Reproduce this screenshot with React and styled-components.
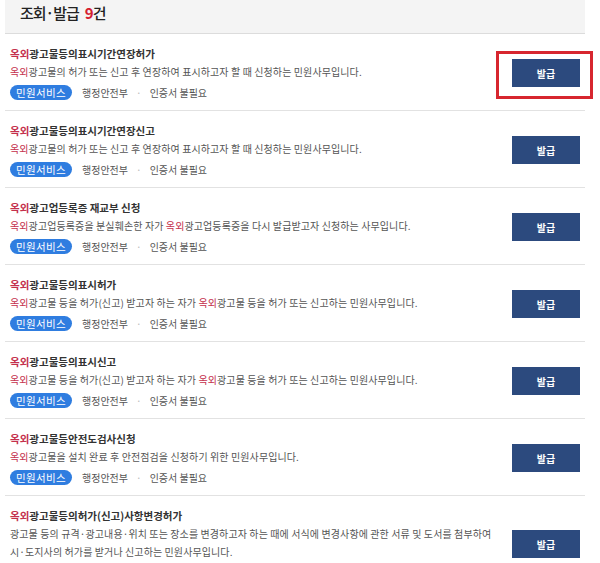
import React from "react"
import styled, { createGlobalStyle } from "styled-components"

const Global = createGlobalStyle`
body {
  margin: 0;
  background: #fff;
  font-family: "Noto Sans CJK KR", "Noto Sans", sans-serif;
}
`

const Page = styled.div`
width: 580px;
margin-left: 5px;
`

const Header = styled.div`
height: 34px;
background-color: #f4f4f4;
border-bottom: 1px solid #dcdcdc;
display: flex;
align-items: flex-start;
padding-left: 15px;
box-sizing: border-box;
`

const HeaderTitle = styled.h2`
margin: 0;
padding-top: 3px;
font-size: 15px;
font-weight: 500;
letter-spacing: -1px;
color: #222;
line-height: 20px;
`

const Count = styled.span`
color: #d5202f;
font-weight: 700;
margin-left: 6px;
`

const Row = styled.div`
display: flex;
align-items: center;
border-bottom: 1px solid #e2e2e2;
padding: 12px 5px 10px 5px;
`

const Info = styled.div`
flex: 1;
min-width: 0;
padding-right: 18px;
`

const Title = styled.div`
font-size: 10.5px;
font-weight: 700;
color: #333;
letter-spacing: 0;
line-height: 16px;
`

const Desc = styled.div`
font-size: 10px;
color: #555;
letter-spacing: 0.1px;
line-height: 18px;
margin-top: 1px;
`

const Hl = styled.span`
color: #c4304c;
`

const Meta = styled.div`
display: flex;
align-items: center;
margin-top: 4px;
font-size: 10px;
color: #555;
letter-spacing: 0;
`

const Tag = styled.span`
display: inline-flex;
align-items: center;
justify-content: center;
width: 62px;
height: 15px;
border-radius: 8px;
background-color: #2f7de0;
color: #fff;
font-size: 10.5px;
letter-spacing: 0.3px;
margin-right: 10px;
`

const Dot = styled.span`
color: #bbb;
margin: 0 8px;
`

const ButtonWrap = styled.div`
position: relative;
flex: none;
`

const IssueButton = styled.button`
width: 68px;
height: 28px;
border: none;
background-color: #2c4a7e;
color: #fff;
font-family: inherit;
font-size: 10px;
font-weight: 700;
cursor: pointer;
`

const Mark = styled.div`
position: absolute;
left: -16px;
top: -8px;
width: 97px;
height: 48px;
border: 3px solid #d7262f;
box-sizing: border-box;
pointer-events: none;
`

const items = [
  {
    title: "옥외광고물등의표시기간연장허가",
    desc: "옥외광고물의 허가 또는 신고 후 연장하여 표시하고자 할 때 신청하는 민원사무입니다.",
    marked: true,
  },
  {
    title: "옥외광고물등의표시기간연장신고",
    desc: "옥외광고물의 허가 또는 신고 후 연장하여 표시하고자 할 때 신청하는 민원사무입니다.",
  },
  {
    title: "옥외광고업등록증 재교부 신청",
    desc: "옥외광고업등록증을 분실훼손한 자가 옥외광고업등록증을 다시 발급받고자 신청하는 사무입니다.",
  },
  {
    title: "옥외광고물등의표시허가",
    desc: "옥외광고물 등을 허가(신고) 받고자 하는 자가 옥외광고물 등을 허가 또는 신고하는 민원사무입니다.",
  },
  {
    title: "옥외광고물등의표시신고",
    desc: "옥외광고물 등을 허가(신고) 받고자 하는 자가 옥외광고물 등을 허가 또는 신고하는 민원사무입니다.",
  },
  {
    title: "옥외광고물등안전도검사신청",
    desc: "옥외광고물을 설치 완료 후 안전점검을 신청하기 위한 민원사무입니다.",
  },
  {
    title: "옥외광고물등의허가(신고)사항변경허가",
    desc: "광고물 등의 규격·광고내용·위치 또는 장소를 변경하고자 하는 때에 서식에 변경사항에 관한 서류 및 도서를 첨부하여 시·도지사의 허가를 받거나 신고하는 민원사무입니다.",
  },
]

// "옥외" shows in red wherever it appears
const highlight = (text) =>
  text.split("옥외").map((part, i) => (
    <React.Fragment key={i}>
      {i > 0 && <Hl>옥외</Hl>}
      {part}
    </React.Fragment>
  ))

const App = () => {
  return (
    <Page>
      <Global />
      <Header>
        <HeaderTitle>
          조회·발급<Count>9</Count>건
        </HeaderTitle>
      </Header>
      {items.map((item, i) => (
        <Row key={i}>
          <Info>
            <Title>{highlight(item.title)}</Title>
            <Desc>{highlight(item.desc)}</Desc>
            <Meta>
              <Tag>민원서비스</Tag>
              행정안전부
              <Dot>·</Dot>
              인증서 불필요
            </Meta>
          </Info>
          <ButtonWrap>
            <IssueButton>발급</IssueButton>
            {item.marked && <Mark />}
          </ButtonWrap>
        </Row>
      ))}
    </Page>
  )
}

export default App
